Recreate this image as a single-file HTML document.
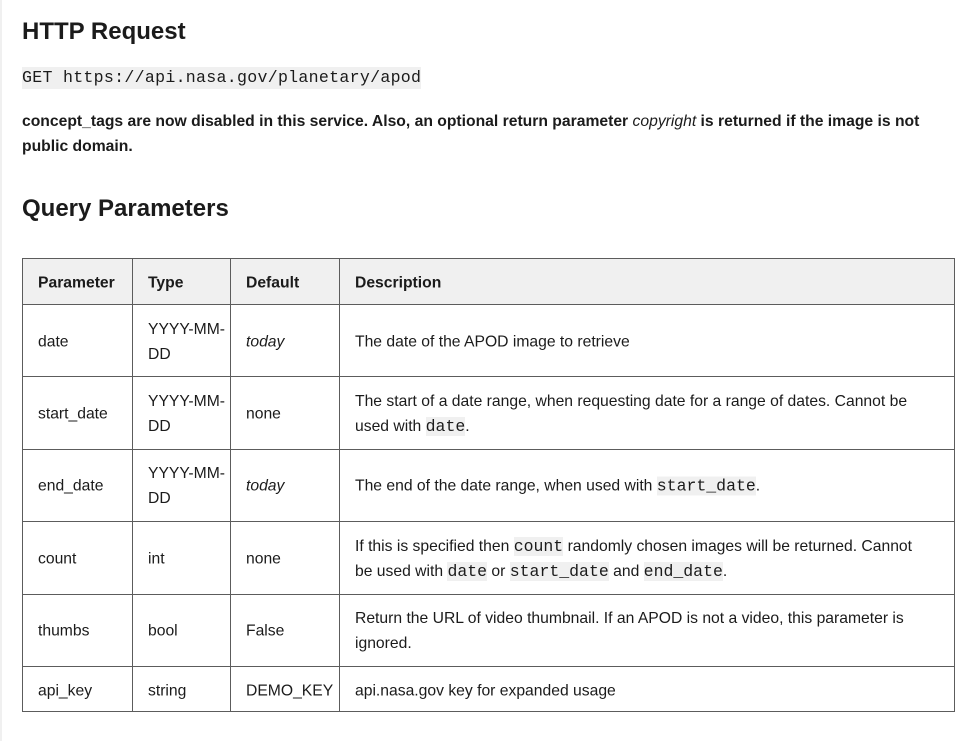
<!DOCTYPE html>
<html><head><style>
body{margin:0;width:975px;height:741px;background:#fff;position:relative;overflow:hidden;font-family:"Liberation Sans",sans-serif;color:#1b1b1b}
.strip{position:absolute;left:0;top:0;width:2px;height:741px;background:#f0f0f0}
.a{position:absolute;white-space:nowrap}
h2{margin:0;font-size:24px;font-weight:bold;position:absolute;left:22px}
code{font-family:"Liberation Mono",monospace;background:#f0f0f0}
.t{position:absolute;left:22px;top:258px;width:933px;height:454px;border:1px solid #5c5c5c;box-sizing:border-box}
.hd{position:absolute;left:0;top:0;width:100%;height:46px;background:#f0f0f0}
.h{position:absolute;left:0;width:100%;height:1px;background:#5c5c5c}
.v{position:absolute;top:0;height:100%;width:1px;background:#5c5c5c}
.c{position:absolute;font-size:15.7px;line-height:25px;white-space:nowrap;transform:translateY(-50%);margin-top:1px}
.c code{font-size:16.5px}
b{font-weight:bold}
</style></head><body>
<div class="strip"></div>
<h2 style="top:18px">HTTP Request</h2>
<div class="a" style="left:22px;top:67px;font-family:'Liberation Mono',monospace;font-size:16.6px;letter-spacing:0.28px;background:#f0f0f0;line-height:22px">GET https://api.nasa.gov/planetary/apod</div>
<div class="a" style="left:22px;top:109px;font-size:15.7px;line-height:25px;font-weight:bold">concept_tags are now disabled in this service. Also, an optional return parameter <i style="font-weight:normal">copyright</i> is returned if the image is not<br>public domain.</div>
<h2 style="top:195px">Query Parameters</h2>
<div class="t">
<div class="hd"></div>
<div class="h" style="top:45px"></div>
<div class="h" style="top:117px"></div>
<div class="h" style="top:190px"></div>
<div class="h" style="top:262px"></div>
<div class="h" style="top:335px"></div>
<div class="h" style="top:407px"></div>
<div class="v" style="left:109px"></div>
<div class="v" style="left:207px"></div>
<div class="v" style="left:316px"></div>
<div class="c" style="left:15px;top:23px"><b>Parameter</b></div>
<div class="c" style="left:125px;top:23px"><b>Type</b></div>
<div class="c" style="left:223px;top:23px"><b>Default</b></div>
<div class="c" style="left:332px;top:23px"><b>Description</b></div>
<div class="c" style="left:15px;top:82px">date</div>
<div class="c" style="left:125px;top:82px">YYYY-MM-<br>DD</div>
<div class="c" style="left:223px;top:82px"><i>today</i></div>
<div class="c" style="left:332px;top:82px">The date of the APOD image to retrieve</div>
<div class="c" style="left:15px;top:154px">start_date</div>
<div class="c" style="left:125px;top:154px">YYYY-MM-<br>DD</div>
<div class="c" style="left:223px;top:154px">none</div>
<div class="c" style="left:332px;top:154px">The start of a date range, when requesting date for a range of dates. Cannot be<br>used with <code>date</code>.</div>
<div class="c" style="left:15px;top:226px">end_date</div>
<div class="c" style="left:125px;top:226px">YYYY-MM-<br>DD</div>
<div class="c" style="left:223px;top:226px"><i>today</i></div>
<div class="c" style="left:332px;top:226px">The end of the date range, when used with <code>start_date</code>.</div>
<div class="c" style="left:15px;top:299px">count</div>
<div class="c" style="left:125px;top:299px">int</div>
<div class="c" style="left:223px;top:299px">none</div>
<div class="c" style="left:332px;top:299px">If this is specified then <code>count</code> randomly chosen images will be returned. Cannot<br>be used with <code>date</code> or <code>start_date</code> and <code>end_date</code>.</div>
<div class="c" style="left:15px;top:371px">thumbs</div>
<div class="c" style="left:125px;top:371px">bool</div>
<div class="c" style="left:223px;top:371px">False</div>
<div class="c" style="left:332px;top:371px">Return the URL of video thumbnail. If an APOD is not a video, this parameter is<br>ignored.</div>
<div class="c" style="left:15px;top:431px">api_key</div>
<div class="c" style="left:125px;top:431px">string</div>
<div class="c" style="left:223px;top:431px">DEMO_KEY</div>
<div class="c" style="left:332px;top:431px">api.nasa.gov key for expanded usage</div>
</div>
</body></html>
